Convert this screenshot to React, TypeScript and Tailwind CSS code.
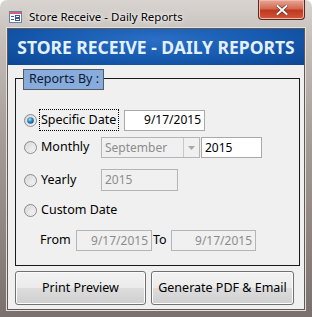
import React from 'react';

const font = { fontFamily: '"Noto Sans", "Open Sans", Arial, sans-serif' };

function Radio({ checked }: { checked?: boolean }) {
  return (
    <svg width="13" height="13" viewBox="0 0 13 13" className="shrink-0">
      <defs>
        <linearGradient id="rg" x1="0" y1="0" x2="1" y2="1">
          <stop offset="0" stopColor="#d0d0d0" />
          <stop offset="1" stopColor="#ffffff" />
        </linearGradient>
        <radialGradient id="dot" cx="0.4" cy="0.35" r="0.7">
          <stop offset="0" stopColor="#9ee4ff" />
          <stop offset="0.5" stopColor="#2b8ac6" />
          <stop offset="1" stopColor="#134f82" />
        </radialGradient>
      </defs>
      <circle cx="6.5" cy="6.5" r="6" fill="url(#rg)" stroke="#8a8a8a" />
      <circle cx="6.5" cy="6.5" r="4.2" fill="none" stroke="#e4e4e4" />
      {checked && <circle cx="6.5" cy="6.5" r="3.3" fill="url(#dot)" />}
    </svg>
  );
}

function FormIcon() {
  return (
    <svg width="13" height="12" viewBox="0 0 13 12">
      <rect x="0.5" y="0.5" width="12" height="11" fill="#ffffff" stroke="#6b7fa8" />
      <rect x="1" y="1" width="11" height="2" fill="#d2607a" />
      <rect x="2" y="5" width="3" height="1" fill="#3b5b9a" />
      <rect x="2" y="8" width="3" height="1" fill="#3b5b9a" />
      <rect x="6.5" y="4.5" width="4" height="2" fill="none" stroke="#3b5b9a" />
      <rect x="6.5" y="7.5" width="4" height="2" fill="none" stroke="#3b5b9a" />
    </svg>
  );
}

function Field({ value, disabled, w, align = 'right' }: { value: string; disabled?: boolean; w: string; align?: 'left' | 'right' }) {
  return (
    <div
      className={`${w} h-[21px] flex items-center border px-[3px] text-[12px] whitespace-nowrap ${
        disabled ? 'bg-[#f0f0f0] border-[#b5b5b5] text-[#8c8c8c]' : 'bg-white border-[#a9a9a9] text-black'
      } ${align === 'right' ? 'justify-end' : 'justify-start'}`}
    >
      {value}
    </div>
  );
}

function Button({ label, w }: { label: string; w: string }) {
  return (
    <div
      className={`${w} h-[34px] rounded-[3px] border border-[#707070] bg-[linear-gradient(#f2f2f2,#ebebeb_50%,#dddddd_50%,#cfcfcf)] shadow-[inset_0_0_0_1px_#fcfcfc] flex items-center justify-center text-[12.5px] text-black whitespace-nowrap`}
    >
      {label}
    </div>
  );
}

export default function App() {
  return (
    <div
      style={font}
      className="w-[312px] h-[317px] overflow-hidden rounded-t-[7px] bg-[linear-gradient(180deg,#d8d4d0_0%,#c6bfbb_12%,#a49a96_45%,#8a7f7b_80%,#7a706d_100%)] flex flex-col"
    >
      {/* Title bar */}
      <div className="h-[28px] flex items-start shrink-0">
        <div className="flex items-center pl-[9px] pt-[8px] gap-[7px]">
          <FormIcon />
          <span className="text-[11.5px] text-black whitespace-nowrap [text-shadow:0_0_6px_#ffffff,0_0_3px_#ffffff]">
            Store Receive - Daily Reports
          </span>
        </div>
        <div className="ml-auto mr-[7px] w-[47px] h-[20px] rounded-b-[4px] border border-t-0 border-[#5a2a22] bg-[linear-gradient(#e9a796,#d26a52_45%,#c0381f_55%,#d2573a)] shadow-[inset_0_0_0_1px_#f0b9aa] flex items-center justify-center">
          <svg width="12" height="10" viewBox="0 0 12 10">
            <path d="M1.5 1 L10.5 9 M10.5 1 L1.5 9" stroke="#5b2a20" strokeWidth="3.2" strokeLinecap="square" />
            <path d="M1.5 1 L10.5 9 M10.5 1 L1.5 9" stroke="#ffffff" strokeWidth="2" strokeLinecap="square" />
          </svg>
        </div>
      </div>

      {/* Client area */}
      <div className="mx-[7px] h-[282px] border border-[#5f5855] bg-[#f0f0f0] flex flex-col shadow-[0_0_0_1px_#e6e0dc]">
        {/* Header */}
        <div className="h-[36px] shrink-0 bg-[radial-gradient(ellipse_at_50%_30%,#2a6fc6_0%,#1659ae_55%,#0c4692_100%)] flex items-center justify-center">
          <span className="text-[17.5px] font-bold text-[#e3f1ff] whitespace-nowrap">
            STORE RECEIVE - DAILY REPORTS
          </span>
        </div>

        {/* Group box */}
        <div className="relative ml-[7px] mt-[13px] w-[285px] h-[188px] border border-[#1a1a1a]">
          <div className="absolute -top-[10px] left-[7px] w-[81px] h-[21px] bg-[#88acdb] border border-[#555a66] flex items-center pl-[5px] text-[12.5px] text-[#0d1a33] whitespace-nowrap">
            Reports By :
          </div>

          {/* Specific Date */}
          <div className="flex items-center mt-[30px] h-[22px]">
            <div className="ml-[8px]"><Radio checked /></div>
            <div className="ml-[2px] w-[80px] h-[22px] border border-dotted border-black flex items-center pl-[1px] text-[12.5px] text-black whitespace-nowrap">
              Specific Date
            </div>
            <div className="ml-[5px]">
              <Field value="9/17/2015" w="w-[81px]" />
            </div>
          </div>

          {/* Monthly */}
          <div className="flex items-center mt-[6px] h-[21px]">
            <div className="ml-[8px]"><Radio /></div>
            <span className="ml-[4px] w-[60px] text-[12.5px] text-black">Monthly</span>
            <div className="w-[99px] h-[21px] flex border border-[#b5b5b5] bg-[#f0f0f0]">
              <div className="flex-1 flex items-center pl-[3px] text-[12px] text-[#8c8c8c]">September</div>
              <div className="w-[16px] border-l border-[#c8c8c8] flex items-center justify-center">
                <svg width="7" height="4" viewBox="0 0 7 4"><path d="M0 0 H7 L3.5 4 Z" fill="#a8a8a8" /></svg>
              </div>
            </div>
            <div className="ml-[1px]">
              <Field value="2015" w="w-[61px]" align="left" />
            </div>
          </div>

          {/* Yearly */}
          <div className="flex items-center mt-[11px] h-[22px]">
            <div className="ml-[8px]"><Radio /></div>
            <span className="ml-[4px] w-[60px] text-[12.5px] text-black">Yearly</span>
            <Field value="2015" w="w-[77px] !h-[22px]" disabled align="left" />
          </div>

          {/* Custom Date */}
          <div className="flex items-center mt-[9px] h-[20px]">
            <div className="ml-[8px]"><Radio /></div>
            <span className="ml-[4px] text-[12.5px] text-black">Custom Date</span>
          </div>

          {/* From / To */}
          <div className="flex items-center mt-[10px] h-[21px]">
            <span className="ml-[24px] w-[36px] text-[12.5px] text-black">From</span>
            <Field value="9/17/2015" disabled w="w-[76px]" />
            <span className="ml-[1px] w-[18px] text-[12.5px] text-black">To</span>
            <Field value="9/17/2015" disabled w="w-[85px]" />
          </div>
        </div>

        {/* Buttons */}
        <div className="flex ml-[7px] mt-[5px] gap-[5px]">
          <Button label="Print Preview" w="w-[131px]" />
          <Button label="Generate PDF & Email" w="w-[143px]" />
        </div>
      </div>
    </div>
  );
}
